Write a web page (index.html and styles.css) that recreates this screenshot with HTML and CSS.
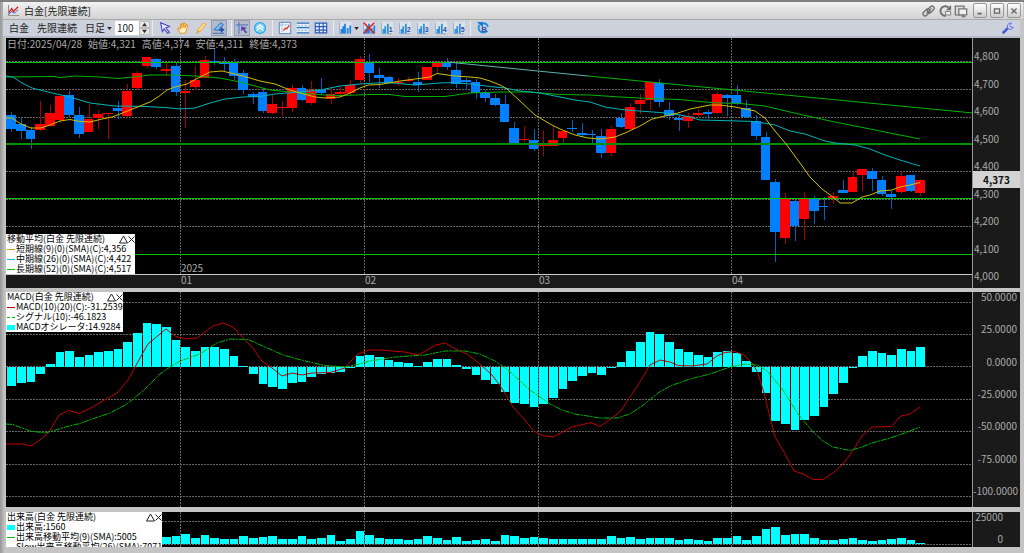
FILE: index.html
```html
<!doctype html>
<html lang="ja">
<head>
    <meta charset="utf-8" />
    <title>白金[先限連続]</title>
    <link rel="stylesheet" href="styles.css">
</head>
<body>
    <!-- icons -->
    <svg class="defs" width="0" height="0">
        <symbol id="i-bars" viewBox="0 0 16 16">
            <path d="M0 1h15v14H0z" fill="#dde1e8"/>
            <path d="M1.5 1v13.500M1 14.500h14" stroke="#8a9cb8" fill="none"/>
            <path d="M3 9h2v5H3zM5 6h2v8H5zM7 3h2v11H7zM10 8h2v6h-2zM13 5h2v9h-2z" fill="#1a80e8"/>
        </symbol>
        <symbol id="i-cell" viewBox="0 0 16 16">
            <path d="M0 1h15v14H0z" fill="#dde1e8"/>
            <path d="M1.500 2v12.500H14" stroke="#8a9cb8" fill="none"/>
            <path d="M3 9h2v5H3zM5 6h2v8H5zM8 3h2v11H8z" fill="#2a90e8"/>
        </symbol>
        <symbol id="i-up" viewBox="0 0 9 9">
            <path d="M.5 8L4.500 1l4 7z" fill="none" stroke="#222"/>
        </symbol>
        <symbol id="i-close" viewBox="0 0 7 9">
            <path d="M.5 1.500l6 6M6.500 1.500l-6 6" fill="none" stroke="#222"/>
        </symbol>
    </svg>

    <div id="window">
        <div id="title">
            <svg class="logo" viewBox="0 0 12 12"><path d="M.5 0v11.500H12" stroke="#888" fill="none"/><path d="M1 8l3-4 2 3 5-5" stroke="#e02020" stroke-width="1.500" fill="none"/><path d="M1 10l3-3 3 2 4-4" stroke="#3050c0" fill="none"/></svg>
            <h1>白金[先限連続]</h1>
            <button class="tool" title="リンク"><svg viewBox="0 0 16 16"><g fill="none" stroke="#707070" stroke-width="1.500"><rect x="0" y="7" width="9" height="5" rx="2.500" transform="rotate(-45 5 9)"/><rect x="6" y="4" width="9" height="5" rx="2.500" transform="rotate(-45 10 7)"/><path d="M5 11l6-6"/></g></svg></button>
            <button class="tool" title="元に戻す"><svg viewBox="0 0 16 16"><path d="M12 4A5.500 5.500 0 1 0 9 13.500" fill="none" stroke="#707070" stroke-width="2.200"/><path d="M15 1v6H9z" fill="#707070"/><path d="M8.500 8.500h6v4h-6z" fill="#eee" stroke="#707070"/></svg></button>
            <button class="tool" title="重ねる"><svg viewBox="0 0 16 16"><path d="M1.500 2.500h10v10h-10z" fill="#ddd" stroke="#777" stroke-width="1.500"/><path d="M5.500 5.500h9v7h-9z" fill="#eee" stroke="#777" stroke-width="1.500"/><path d="M8 15l3-3 3 3z" fill="#777"/></svg></button>
            <div class="winbtns">
                <button title="最小化"><svg viewBox="0 0 14 14"><path d="M4 9h5v2H4z" fill="#666"/></svg></button>
                <button title="最大化"><svg viewBox="0 0 14 14"><path d="M4 4.500h6v5H4z" fill="none" stroke="#666" stroke-width="1.500"/></svg></button>
                <button title="閉じる"><svg viewBox="0 0 14 14"><path d="M4 4l6 6M10 4l-6 6" stroke="#666" stroke-width="1.500"/></svg></button>
            </div>
        </div>

        <div id="toolbar">
            <button class="word">白金</button>
            <button class="word">先限連続</button>
            <label class="ashi"><select aria-label="足種"><option>日足</option><option>週足</option></select><svg viewBox="0 0 6 4"><path d="M0 0h6L3 4z" fill="#222"/></svg></label>
            <div class="count">
                <input type="text" value="100" aria-label="本数">
                <div class="spin">
                    <button title="増やす"><svg viewBox="0 0 10 6"><path d="M2 5l3-4 3 4z" fill="#333"/></svg></button>
                    <button title="減らす"><svg viewBox="0 0 10 6"><path d="M2 1l3 4 3-4z" fill="#333"/></svg></button>
                </div>
            </div>
            <div class="group g1">
                <button class="tool" title="選択"><svg viewBox="0 0 16 16"><path d="M3 2l10 4-4 2 4 5-2 1-4-5-2 3z" fill="#e4e4ff" stroke="#4848c0" stroke-width="1.300"/></svg></button>
                <button class="tool" title="移動"><svg viewBox="0 0 16 16"><path d="M5 14L2 9l1-1 2 1V4h1.500v4V2.500H8V8l1-5.500h1.500L10 8l2-3.500 1.300.5L12 11l-2 3z" fill="#fff0c8" stroke="#e89a28" stroke-width="1.200"/></svg></button>
                <button class="tool" title="ペン"><svg viewBox="0 0 16 16"><path d="M3 14l2-5 6-7 3 2-6 7z" fill="#ffd890" stroke="#e8a030"/><path d="M3 14l1-3 2 1z" fill="#e88a20"/></svg></button>
                <button class="tool on" title="描画"><svg viewBox="0 0 16 16"><path d="M2 10l8-8 3 2-6 7zM1 14h13" fill="#78b8f0" stroke="#3060b0"/><path d="M8 10h6M11 7v6" stroke="#1850a8" stroke-width="2"/></svg></button>
            </div>
            <div class="group g2">
                <button class="tool on" title="十字線"><svg viewBox="0 0 16 16"><path d="M4.500 1v14M1 4.500h14" stroke="#3868b8" fill="none"/><path d="M7 6l7 2-3 1 3 4-2 1-3-4-2 2z" fill="#6040b0"/></svg></button>
                <button class="tool" title="上へ"><svg viewBox="0 0 16 16"><circle cx="8" cy="8" r="7" fill="#30a8e8"/><circle cx="8" cy="8" r="5.500" fill="#80d0f4"/><path d="M4 8l4-3.500L12 8M4 11l4-3.500 4 3.500" stroke="#fff" stroke-width="1.500" fill="none"/></svg></button>
            </div>
            <div class="group g3">
                <button class="tool" title="スケール"><svg viewBox="0 0 16 16"><path d="M1.500 1.500h13v13h-13z" fill="#f0f4fa" stroke="#4878b8"/><path d="M4.500 2v12M2 4.500h12" stroke="#88a8d0" stroke-dasharray="2 1"/><path d="M6 11l3-3 1 1 3-4" stroke="#d83818" stroke-width="1.500" fill="none"/></svg></button>
                <button class="tool" title="横線"><svg viewBox="0 0 16 16"><path d="M1 2h14v12H1z" fill="#e4eef8"/><path d="M1 2.500h14M1 7.500h14M1 13.500h14" stroke="#2870b8" stroke-width="1.500"/><path d="M2 5.500h13M2 10.500h13" stroke="#70a0d0" stroke-dasharray="2 2"/></svg></button>
                <button class="tool" title="格子"><svg viewBox="0 0 16 16"><path d="M1.500 2.500h13v11h-13zM1 6.500h14M1 10.500h14M6 2v12M10.500 2v12" fill="#e4eefc" stroke="#2858b8" stroke-width="1.300"/></svg></button>
            </div>
            <div class="group g4">
                <button class="tool wide" title="指標"><svg viewBox="0 0 16 16"><use href="#i-bars"/></svg><svg class="caret" viewBox="0 0 6 4"><path d="M0 0h6L3 4z" fill="#222"/></svg></button>
                <button class="tool" title="削除"><svg viewBox="0 0 16 16"><use href="#i-bars"/><path d="M2 2l12 12M14 2L2 14" stroke="#d82828" stroke-width="2"/></svg></button>
                <button class="tool" title="パターン1"><svg viewBox="0 0 16 16"><use href="#i-cell"/><text x="10" y="12">1</text></svg></button>
                <button class="tool" title="パターン2"><svg viewBox="0 0 16 16"><use href="#i-cell"/><text x="10" y="12">2</text></svg></button>
                <button class="tool" title="パターン3"><svg viewBox="0 0 16 16"><use href="#i-cell"/><text x="10" y="12">3</text></svg></button>
                <button class="tool" title="パターン4"><svg viewBox="0 0 16 16"><use href="#i-cell"/><text x="10" y="12">4</text></svg></button>
                <button class="tool" title="パターン5"><svg viewBox="0 0 16 16"><use href="#i-cell"/><text x="10" y="12">5</text></svg></button>
            </div>
            <div class="group g5">
                <button class="tool" title="更新"><svg viewBox="0 0 16 16"><path d="M4 4.500a5.500 5.500 0 1 0 9 6.500M8 2.500a5.500 5.500 0 0 1 5.500 4" fill="none" stroke="#2090e0" stroke-width="2.200"/><path d="M1 1h7v6z" fill="#1878d0"/><text class="b" x="6" y="12">B</text></svg></button>
            </div>
            <button class="tool setting" title="設定"><svg viewBox="0 0 16 16"><path d="M2 14l7-7" stroke="#4858d8" stroke-width="3"/><path d="M9 3a3.500 3.500 0 1 0 5 4l-3 0-1-2 2-3z" fill="#c8d0ff" stroke="#5868d8"/></svg></button>
        </div>

        <div id="price" class="panel">
            <div class="plot">
                <svg id="priceChart" viewBox="6 38 966 236" preserveAspectRatio="none"></svg>
                <div class="months"><span></span><span>01</span><span>02</span><span>03</span><span>04</span></div>
                <p class="ohlc"><span>日付:2025/04/28</span><span>始値:4,321</span><span>高値:4,374</span><span>安値:4,311</span><span>終値:4,373</span></p>
                <span class="year">2025</span>
                <div class="legend">
                    <h2>移動平均(白金 先限連続)</h2>
                    <div class="ctl"><button title="最小化"><svg width="9" height="9"><use href="#i-up"/></svg></button><button title="閉じる"><svg width="7" height="9"><use href="#i-close"/></svg></button></div>
                    <ul>
                        <li><i class="yellow"></i>短期線(9)(0)(SMA)(C):4,356</li>
                        <li><i class="cyan"></i>中期線(26)(0)(SMA)(C):4,422</li>
                        <li><i class="green"></i>長期線(52)(0)(SMA)(C):4,517</li>
                    </ul>
                </div>
            </div>
            <div class="axis">
                <span>4,800</span><span>4,700</span><span>4,600</span><span>4,500</span><span>4,400</span><span>4,300</span><span>4,200</span><span>4,100</span><span>4,000</span>
                <strong>4,373</strong>
            </div>
        </div>

        <div id="macd" class="panel">
            <div class="plot">
                <svg id="macdChart" viewBox="6 292 966 215" preserveAspectRatio="none"></svg>
                <div class="legend">
                    <h2>MACD(白金 先限連続)</h2>
                    <div class="ctl"><button title="最小化"><svg width="9" height="9"><use href="#i-up"/></svg></button><button title="閉じる"><svg width="7" height="9"><use href="#i-close"/></svg></button></div>
                    <ul>
                        <li><i class="red"></i>MACD(10)(20)(C):-31.2539</li>
                        <li><i class="green dash"></i>シグナル(10):-46.1823</li>
                        <li><i class="fill"></i>MACDオシレータ:14.9284</li>
                    </ul>
                </div>
            </div>
            <div class="axis">
                <span>50.0000</span><span>25.0000</span><span>0.0000</span><span>-25.0000</span><span>-50.0000</span><span>-75.0000</span><span>-100.0000</span>
            </div>
        </div>

        <div id="volume" class="panel">
            <div class="plot">
                <svg id="volumeChart" viewBox="6 512 966 35" preserveAspectRatio="none"></svg>
                <div class="legend">
                    <h2>出来高(白金 先限連続)</h2>
                    <div class="ctl"><button title="最小化"><svg width="9" height="9"><use href="#i-up"/></svg></button><button title="閉じる"><svg width="7" height="9"><use href="#i-close"/></svg></button></div>
                    <ul>
                        <li><i class="fill"></i>出来高:1560</li>
                        <li><i class="green"></i>出来高移動平均(9)(SMA):5005</li>
                        <li><i class="red dash"></i>Slow出来高移動平均(26)(SMA):7071</li>
                    </ul>
                </div>
            </div>
            <div class="axis"><span>25000</span><span>0</span></div>
        </div>
    </div>
    <script src="chart.js"></script>
</body>
</html>
```
FILE: styles.css
```css
*{
    box-sizing:border-box;
    margin:0;
    padding:0;
}
body{
    background-color:#bcbcbc;
    font:10px/10px "Noto Sans CJK JP",sans-serif;
    color:#222;
}
button,input,select{
    border:0;
    background:none;
    font:inherit;
    color:inherit;
}
.defs{
    position:absolute;
}
#window{
    display:flex;
    flex-direction:column;
    height:100vh;
    min-height:300px;
    padding:0 4px 6px 6px;
    border-top:2px solid #808080;
    background:linear-gradient(90deg,#969696 0,#bdbdbd 4px,#c4c4c4 5px,#c4c4c4 100%);
}

/* title bar */
#title{
    display:flex;
    align-items:center;
    flex:none;
    height:17px;
    margin:0 -3px;
    padding-left:5px;
    background:linear-gradient(#f2f2f2,#d2d2d2);
}
#title .logo{
    width:11px;
    height:11px;
    margin-right:5px;
}
#title h1{
    flex:1;
    font-size:10px;
    font-weight:400;
}
.tool{
    display:flex;
    align-items:center;
    justify-content:center;
    width:16px;
    height:16px;
}
.tool svg{
    flex:none;
    width:14px;
    height:14px;
}
.winbtns{
    display:flex;
    gap:3px;
    margin:0 2px 0 4px;
}
.winbtns button{
    width:14px;
    height:15px;
    border:1px solid #999;
    border-radius:2px;
    background:linear-gradient(#fff,#ccc);
}
.winbtns svg{
    display:block;
    width:12px;
    height:12px;
}

/* toolbar */
#toolbar{
    display:flex;
    align-items:center;
    flex:none;
    height:19px;
    margin-left:-3px;
    padding-left:6px;
    border-top:1px solid #aaa;
    border-bottom:2px solid #b4bac8;
    background-color:#cdd1dc;
    white-space:nowrap;
}
.word{
    margin-right:8px;
}
.ashi{
    display:flex;
    align-items:center;
    gap:2px;
    margin-right:3px;
}
.ashi select{
    width:20px;
    appearance:none;
}
.ashi svg{
    width:5px;
    height:3px;
}
.count{
    display:flex;
    height:14px;
}
.count input{
    width:24px;
    padding:0 0 2px 2px;
    background-color:#fff;
}
.spin{
    display:flex;
    flex-direction:column;
}
.spin button{
    width:11px;
    height:7px;
    border:1px solid #bbb;
    background-color:#e8e8e8;
}
.spin svg{
    display:block;
    width:9px;
    height:5px;
}
.group{
    display:flex;
    gap:2px;
    padding-left:4px;
    border-left:1px solid #e8eaf0;
}
.g1{
    margin-left:2px;
}
.g2{
    margin-left:4px;
    padding-left:2px;
}
.g3,
.g4{
    margin-left:4px;
}
.g5{
    margin-left:3px;
}
.tool.on{
    background-color:#b4bccc;
    border:1px solid #949cb0;
}
.tool.wide{
    width:21px;
}
.tool.wide .caret{
    width:5px;
    height:3px;
    margin-left:2px;
}
.tool text{
    font:bold 8px "Liberation Sans",sans-serif;
    fill:#2850a8;
}
.tool text.b{
    font-size:9px;
}
.setting{
    margin-left:auto;
    margin-right:4px;
}

/* chart panels */
.panel{
    display:flex;
    min-height:0;
    margin-bottom:5px;
    background-color:#1a1a1a;
}
#price{
    flex:250 1 0;
    margin-bottom:4px;
}
#macd{
    flex:215 1 0;
}
#volume{
    flex:35 1 0;
    margin-bottom:0;
}
.plot{
    position:relative;
    display:flex;
    flex-direction:column;
    flex:1;
    min-width:0;
    overflow:hidden;
    border-right:1px solid #999;
}
.plot > svg{
    display:block;
    flex:1;
    width:100%;
    min-height:0;
    background-color:#000;
}
.months{
    display:grid;
    grid-template-columns:175fr 184fr 174fr 193fr 240fr;
    flex:none;
    height:14px;
    border-top:1px solid #ccc;
    color:#aaa;
}
.axis{
    position:relative;
    display:flex;
    flex-direction:column;
    justify-content:space-between;
    width:47px;
    color:#aaa;
}
#price .axis{
    padding:13px 0 7px 1px;
}
#macd .axis{
    padding:0 3px 11px 0;
    text-align:right;
}
#volume .axis{
    padding:0 17px 3px 0;
    text-align:right;
}
.axis strong{
    position:absolute;
    top:53%;
    left:0;
    right:0;
    padding-left:10px;
    background-color:#d4d4d4;
    color:#111;
    font-size:10px;
    line-height:17px;
}
.ohlc{
    position:absolute;
    top:1px;
    left:1px;
    display:flex;
    gap:6px;
    color:#aaa;
    white-space:nowrap;
}
.year{
    position:absolute;
    left:18%;
    bottom:15px;
    padding-left:1px;
    color:#aaa;
}

/* legends over the plots */
.legend{
    position:absolute;
    top:0;
    left:0;
    display:grid;
    grid-template-columns:1fr auto;
    width:117px;
    padding-left:1px;
    background-color:#fff;
    color:#000;
    font-size:9px;
    line-height:10px;
    white-space:nowrap;
}
#price .legend{
    top:auto;
    bottom:14px;
    width:129px;
}
#volume .legend{
    width:auto;
    min-width:152px;
}
.legend h2{
    font-size:9px;
    font-weight:400;
}
.legend ul{
    grid-column:1 / 3;
    list-style:none;
}
.legend li{
    display:flex;
    align-items:center;
    height:10px;
}
.legend i{
    flex:none;
    width:8px;
    margin-right:1px;
    border-top:1px solid;
}
.legend .ctl{
    display:flex;
}
.legend .ctl svg{
    display:block;
}
.legend i.yellow{
    border-color:#c8a000;
}
.legend i.cyan{
    border-color:#00c0e8;
}
.legend i.green{
    border-color:#00c000;
}
.legend i.red{
    border-color:#d00000;
}
.legend i.dash{
    border-top-style:dashed;
}
.legend i.fill{
    height:5px;
    border:0;
    background-color:#0ff;
}

/* drawing */
.bar,
.grid,
.body,
.wick{
    shape-rendering:crispEdges;
}
.bar{
    fill:#0ff;
}
.grid{
    stroke:#686868;
    stroke-dasharray:2 1;
}
.up{
    fill:#f00;
    stroke:none;
}
.down{
    fill:#0080ff;
    stroke:none;
}
.wick.up{
    fill:#a80000;
}
.wick.down{
    fill:#0060c0;
}
.line{
    fill:none;
    stroke-width:1;
    vector-effect:non-scaling-stroke;
}
.line.yellow{
    stroke:#d0c000;
}
.line.cyan{
    stroke:#00b4b8;
}
.line.green{
    stroke:#00b400;
}
.line.pale{
    stroke:#60b0b0;
}
.line.red{
    stroke:#c00000;
}
.line.level{
    stroke:#00c800;
}
.line.level.thick{
    stroke:#009000;
    stroke-width:2;
}
.line.signal{
    stroke:#00b400;
    stroke-dasharray:6 1 2 1;
}
```
FILE: chart.js
```js
var NS = 'http://www.w3.org/2000/svg';
var X0 = 12.2, STEP = 9.67, LEFT = 6, RIGHT = 973;

function add(svg, tag, cls, attrs){
    var el = document.createElementNS(NS, tag);
    el.setAttribute('class', cls);
    for( var a in attrs ){
        el.setAttribute(a, attrs[a]);
    }
    svg.appendChild(el);
}
function rect(svg, cls, x, y, w, h){
    add(svg, 'rect', cls, {x: x, y: y, width: w, height: Math.max(h, 1)});
}
function line(svg, cls, points){
    add(svg, 'polyline', 'line ' + cls, {points: points});
}
function grid(svg, rows, top, bottom){
    var i;
    for( i = 0; i < rows.length; i++ ){
        add(svg, 'line', 'grid', {x1: LEFT, x2: RIGHT, y1: rows[i], y2: rows[i]});
    }
    var cols = [180.5, 364.5, 538.5, 731.5];
    for( i = 0; i < cols.length; i++ ){
        add(svg, 'line', 'grid', {x1: cols[i], x2: cols[i], y1: top, y2: bottom});
    }
}
// 棒の左端、隣との間に1pxあける
function barX(i){
    return Math.round(X0 + STEP * i - 4.8);
}
function bars(svg, tops, base, first){
    for( var i = 0; i < tops.length; i++ ){
        var x = barX(i + first);
        var w = barX(i + first + 1) - x - 1;
        rect(svg, 'bar', x, Math.min(tops[i], base), w, Math.abs(tops[i] - base));
    }
}

// ローソク足: 陽線r/陰線b 実体上,実体下,高値,安値
var candles = ('b115,129,112,132 b124,131,117,139 b130,139,127,149 r124,130,101,131 r113,126,105,127 r96,120,96,123 ' +
    'b95,115,91,118 b115,134,107,138 r119,132,104,132 r114,118,110,129 r113,114,113,139 b108,111,101,119 ' +
    'r91,116,84,118 r73,88,71,90 r57,66,57,68 b59,67,58,69 r69,71,63,76 b66,92,63,96 r91,93,80,128 r80,87,66,90 ' +
    'r60,78,56,78 b61,62,48,65 b62,64,57,71 b63,76,59,80 b73,90,70,94 b94,97,92,104 b92,111,88,113 r104,113,95,114 ' +
    'r107,108,101,116 r88,108,85,112 b88,100,85,101 r90,103,81,105 b90,93,78,95 r94,99,87,104 r92,94,87,97 ' +
    'r85,93,80,95 r59,80,56,84 b62,73,54,82 b75,78,68,88 b77,83,76,84 r82,83,78,86 r80,81,77,82 b82,85,72,92 ' +
    'r67,80,67,80 r62,67,61,73 b62,67,58,70 b70,84,63,88 b80,82,78,90 b82,93,79,99 b93,98,90,102 b98,105,94,106 ' +
    'b104,122,95,122 b128,143,122,145 r139,140,126,142 b140,149,129,151 r145,146,130,156 r140,146,126,146 ' +
    'r131,138,130,144 b128,129,120,132 b133,135,123,137 b134,135,130,144 b136,153,129,158 r129,153,126,156 ' +
    'b118,127,113,128 r107,129,103,131 r100,104,94,114 r82,100,82,110 b83,102,79,107 b110,116,102,120 ' +
    'b118,120,115,131 r116,121,113,128 r113,115,109,117 b112,114,110,119 r94,113,92,114 b95,98,94,116 ' +
    'b95,103,85,105 b108,117,100,118 b121,136,115,140 b137,180,132,180 b182,232,179,262 r198,238,193,244 ' +
    'b201,226,200,241 r198,219,192,240 b198,211,196,224 b206,207,197,220 r196,199,192,204 b190,193,180,193 ' +
    'r177,192,172,192 r169,175,169,191 b171,179,168,191 b180,194,176,196 b194,197,191,209 r176,192,172,194 ' +
    'b175,191,175,192 r180,193,179,196').split(' ');

var price = document.getElementById('priceChart');
grid(price, [61.5, 89.5, 117.5, 171.5, 199.5, 226.5], 38, 274);
for( var i = 0; i < candles.length; i++ ){
    var cls = candles[i].charAt(0) == 'r' ? 'up' : 'down';
    var v = candles[i].substr(1).split(',');
    var x = barX(i) - 1;
    rect(price, 'wick ' + cls, x + 5, v[2], 1, v[3] - v[2]);
    rect(price, 'body ' + cls, x, v[0], barX(i + 1) - 1 - x, v[1] - v[0]);
}
var levels = [62.5, 144, 198.5, 254.5];
for( i = 0; i < levels.length; i++ ){
    line(price, i == 1 ? 'level thick' : 'level', LEFT + ',' + levels[i] + ' ' + RIGHT + ',' + levels[i]);
}
line(price, 'green', '6,77 55,76.5 60,77.5 75,76 100,77 118,78.5 133,77 150,75 175,75 195,76 220,78 240,82 255,86 270,90 300,93 325,95 340,95.5 370,94.5 390,94.5 405,96.5 445,96.5 470,93 500,92 530,92 560,94.5 590,95 620,97 650,98.5 680,99.5 705,102 720,103 740,103.5 765,106 790,112 830,121 870,129 900,135 920,139');
line(price, 'cyan', '6,76 13,77 22,83 32,88 50,92.5 70,97 90,103 115,106 145,106.5 165,107.5 180,109 195,108 210,103 225,99 243,97 260,96.5 275,94 300,92 320,90 340,86 360,84 375,83 387,82.5 415,85 440,83 455,82.5 475,84.5 490,86.5 505,88 520,91 540,93 555,96 575,100 590,102 605,107 625,110 660,112.5 680,115 690,117 700,120 720,120.5 755,121.5 775,125 790,131 805,134 825,141 835,143 855,145 870,149 885,155 900,160 910,163 920,166');
line(price, 'yellow', '6,118 12,118 21,124 31,128 41,128 50,125 60,121 70,119.5 80,121.5 90,122 102,119 112,117 120,114 130,110 140,106 150,102 158,97 167,90 175,87 187,84 200,77 210,72 222,71 235,74 243,76 260,81 275,84 290,90 300,93 315,97 325,98 340,97 350,93 360,88 368,85 380,84.5 400,81 415,79 430,77 437,73.5 455,76 470,77 480,78 490,81 500,85 507,89 520,101 535,115 550,124 560,129 575,135 588,138 600,139 615,137 625,133 640,126 652,119 665,116 678,113 690,109 710,105 720,105 735,107 755,111 765,118 775,131 786,144 800,163 810,177 822,189 833,197 840,203 852,203 862,197 870,195 880,191 892,190 900,187 910,185 920,182.5');
// トレンドライン
line(price, 'pale', '447,62 588,76');
line(price, 'green', '588,76 973,113');

// MACD
var macd = document.getElementById('macdChart');
grid(macd, [302.5, 334.5, 366.5, 399.5, 431.5, 464.5, 496.5], 292, 507);
bars(macd, [386,383,382,374,364,352,351,357,355,352,351,349,342,333,323,324,327,340,347,351,347,347,349,356,366,374,384,387,389,383,382,377,374,373,372,368,356,355,357,360,362,363,366,362,359,359,365,369,375,380,384,392,403,404,407,404,398,389,381,376,373,375,368,362,351,342,332,334,342,349,352,355,357,352,351,353,361,372,393,421,424,430,420,416,407,394,383,368,356,351,353,355,349,351,347], 367, 0);
line(macd, 'red', '6,444 23,444 31,446 40,440 49,432 59,415 69,410.5 79,413.5 89,409 103,401 117,393 128,380 140,358 148,344 166,329 175,336 186,339 197,338 213,326 223,323 233,327 248,343 252,347 262,361 272,368 282,376 292,373 302,375 312,373 330,372.5 345,368 350,362 358,354 369,350 380,350 405,352 418,355 436,345 445,343 456,349 467,354 480,364 493,376 503,390 513,407 524,419 534,431 542,435.5 553,437 572,427 591,422.5 600,426.5 620,412 640,382 650,365 660,360 670,362 678,365.5 692,366 707,364 717,356 725,352.5 735,351.5 744,355 753,364 758,373 764,393 775,437 784,452 794,471 803,474 813,479.5 823,479.5 833,473 842,465 852,452 862,436 872,427 891,426.5 901,416 910,414 920,407');
line(macd, 'signal', '6,424 13,424.5 30,431 45,433 52,431 69,426 80,423.5 95,418 110,413 127,404 143,391 160,374 170,367 180,361 200,354 217,343 230,339 248,339.5 265,347 283,355 305,361 325,365.5 345,367 355,365 370,361 395,357 425,355 445,351 465,351 480,354 495,361 508,370 530,390 550,404 562,410 575,414 600,418 617,418 630,414 642,406 658,393 670,386 690,379 710,374 730,367 745,364 758,365 768,372 783,390 798,414 813,432 823,441 833,447 850,450.5 862,447 872,443 890,438 905,433 920,427');

// 出来高
var volume = document.getElementById('volumeChart');
grid(volume, [521.5, 544.5], 512, 547);
bars(volume, [539,537,536,534,538,535,538,539,539,536,538,537,536,539,539,536,539,538,535,541,539,531,535,538,539,539,540,539,536,538,540,537,541,540,539,541,535,536,538,537,538,539,539,539,539,539,539,536,538,537,539,538,538,538,540,539,540,541,538,538,536,540,536,529,527,535,534,534,538,540,540,539,538,540,541,540,539,538,540,543], 544, 15);
```
